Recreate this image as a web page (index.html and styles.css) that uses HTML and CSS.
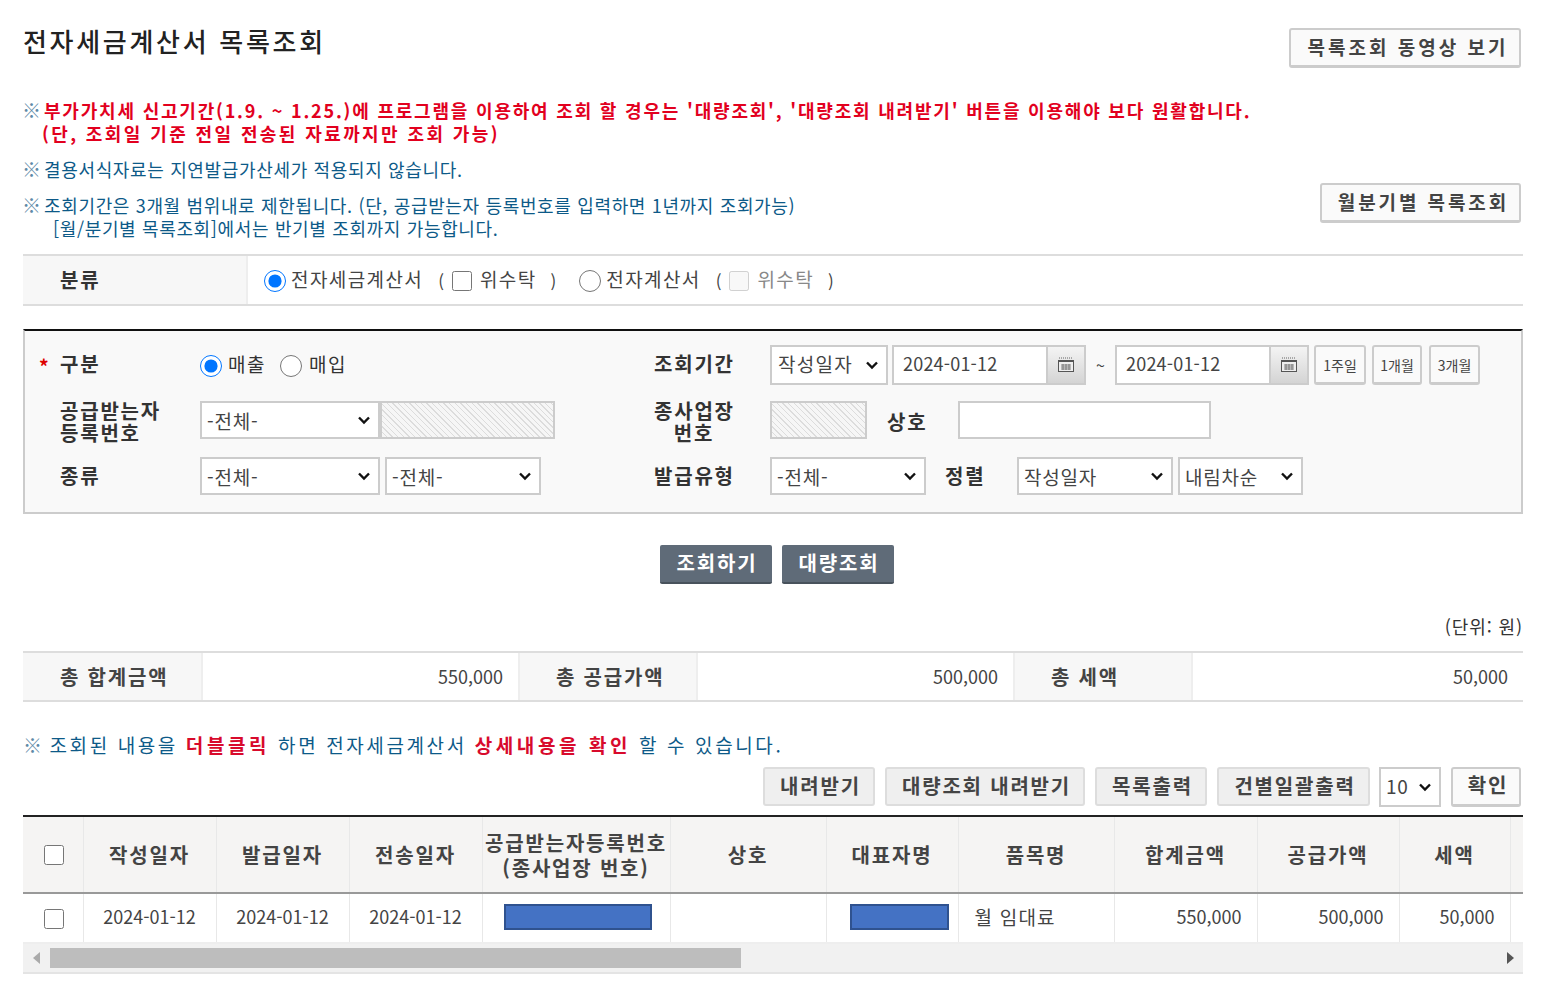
FILE: index.html
```html
<!DOCTYPE html>
<html lang="ko">
<head>
<meta charset="utf-8">
<title>전자세금계산서 목록조회</title>
<link rel="stylesheet" href="styles.css">
</head>
<body>
<main class="page">
  <header class="head">
    <h1 class="title">전자세금계산서 목록조회</h1>
    <button class="btn btn-video">목록조회 동영상 보기</button>
  </header>

  <section class="notices">
    <p class="note red first"><span class="mark">※</span>부가가치세 신고기간(1.9. ~ 1.25.)에 프로그램을 이용하여 조회 할 경우는 '대량조회', '대량조회 내려받기' 버튼을 이용해야 보다 원활합니다.<br><span class="ind1">(단, 조회일 기준 전일 전송된 자료까지만 조회 가능)</span></p>
    <p class="note blue second"><span class="mark">※</span>결용서식자료는 지연발급가산세가 적용되지 않습니다.</p>
    <div class="note-row">
      <p class="note blue"><span class="mark">※</span>조회기간은 3개월 범위내로 제한됩니다. (단, 공급받는자 등록번호를 입력하면 1년까지 조회가능)<br><span class="ind2">[월/분기별 목록조회]에서는 반기별 조회까지 가능합니다.</span></p>
      <button class="btn btn-quarter">월분기별 목록조회</button>
    </div>
  </section>

  <section class="kind">
    <div class="kind-label">분류</div>
    <div class="kind-body">
      <input type="radio" name="kind" class="radio" checked><span class="kind-txt t1">전자세금계산서</span>
      <span class="paren p1">(</span><input type="checkbox" class="check"><span class="kind-txt t2">위수탁</span><span class="paren p2">)</span>
      <input type="radio" name="kind" class="radio r2"><span class="kind-txt t1">전자계산서</span>
      <span class="paren p1">(</span><input type="checkbox" class="check" disabled><span class="kind-txt t2 dim">위수탁</span><span class="paren p2">)</span>
    </div>
  </section>

  <section class="search">
    <div class="s-row r1">
      <div class="s-left">
        <span class="star">*</span><span class="s-label up">구분</span>
        <input type="radio" name="io" class="radio io1" checked><span class="s-txt">매출</span>
        <input type="radio" name="io" class="radio r3"><span class="s-txt">매입</span>
      </div>
      <div class="s-right">
        <span class="s-label rl up">조회기간</span>
        <select class="sel w-date"><option>작성일자</option></select>
        <div class="date">
          <span class="date-val">2024-01-12</span>
          <span class="cal"><svg width="18" height="16" viewBox="0 0 18 16"><path d="M2 1h14" stroke="#666" stroke-dasharray="1 1"/><rect x="1.500" y="3.500" width="15" height="11" fill="#eee" stroke="#555"/><path d="M1 3h16v2H1z" fill="#555"/><path d="M4 8h10M4 10h10M4 12h10M6 7v6M9 7v6M12 7v6" stroke="#666" stroke-width=".8"/></svg></span>
        </div>
        <span class="tilde">~</span>
        <div class="date">
          <span class="date-val">2024-01-12</span>
          <span class="cal"><svg width="18" height="16" viewBox="0 0 18 16"><path d="M2 1h14" stroke="#666" stroke-dasharray="1 1"/><rect x="1.500" y="3.500" width="15" height="11" fill="#eee" stroke="#555"/><path d="M1 3h16v2H1z" fill="#555"/><path d="M4 8h10M4 10h10M4 12h10M6 7v6M9 7v6M12 7v6" stroke="#666" stroke-width=".8"/></svg></span>
        </div>
        <button class="btn-mini m1">1주일</button>
        <button class="btn-mini m2">1개월</button>
        <button class="btn-mini m3">3개월</button>
      </div>
    </div>
    <div class="s-row r2row">
      <div class="s-left">
        <span class="star"></span><span class="s-label two">공급받는자<br>등록번호</span>
        <select class="sel w-180"><option>-전체-</option></select>
        <div class="hatch h1"></div>
      </div>
      <div class="s-right">
        <span class="s-label rl center two">종사업장<br>번호</span>
        <div class="hatch h2"></div>
        <span class="s-label sang">상호</span>
        <div class="box-input"></div>
      </div>
    </div>
    <div class="s-row r3row">
      <div class="s-left">
        <span class="star"></span><span class="s-label">종류</span>
        <select class="sel w-180"><option>-전체-</option></select>
        <select class="sel w-156 gap5"><option>-전체-</option></select>
      </div>
      <div class="s-right">
        <span class="s-label rl">발급유형</span>
        <select class="sel w-156"><option>-전체-</option></select>
        <span class="s-label jung">정렬</span>
        <select class="sel w-156"><option>작성일자</option></select>
        <select class="sel w-125 gap5"><option>내림차순</option></select>
      </div>
    </div>
  </section>

  <div class="actions">
    <button class="btn-dark">조회하기</button>
    <button class="btn-dark">대량조회</button>
  </div>

  <div class="unit">(단위: 원)</div>

  <section class="totals">
    <div class="t-label">총 합계금액</div><div class="t-val">550,000</div>
    <div class="t-label">총 공급가액</div><div class="t-val">500,000</div>
    <div class="t-label">총 세액</div><div class="t-val">50,000</div>
  </section>

  <p class="hint"><span class="hint-mark">※</span> 조회된 내용을 <b>더블클릭</b> 하면 전자세금계산서 <b>상세내용을 확인</b> 할 수 있습니다.</p>

  <div class="toolbar">
    <button class="btn-gray w-112">내려받기</button>
    <button class="btn-gray w-200">대량조회 내려받기</button>
    <button class="btn-gray w-112">목록출력</button>
    <button class="btn-gray w-153">건별일괄출력</button>
    <select class="sel w-62"><option>10</option></select>
    <button class="btn btn-ok">확인</button>
  </div>

  <div class="grid-wrap">
    <table class="grid">
      <colgroup>
        <col class="c60"><col class="c133"><col class="c133"><col class="c133"><col class="c188"><col class="c156"><col class="c132"><col class="c156"><col class="c143"><col class="c142"><col class="c111"><col class="c13">
      </colgroup>
      <thead>
        <tr>
          <th><input type="checkbox" class="check"></th>
          <th>작성일자</th><th>발급일자</th><th>전송일자</th>
          <th class="th-two">공급받는자등록번호<br>(종사업장 번호)</th>
          <th>상호</th><th>대표자명</th><th>품목명</th><th>합계금액</th><th>공급가액</th><th>세액</th><th></th>
        </tr>
      </thead>
      <tbody>
        <tr>
          <td><input type="checkbox" class="check"></td>
          <td>2024-01-12</td><td>2024-01-12</td><td>2024-01-12</td>
          <td><span class="mask m-a"></span></td>
          <td></td>
          <td><span class="mask m-b"></span></td>
          <td class="left">월 임대료</td>
          <td class="right">550,000</td><td class="right">500,000</td><td class="right">50,000</td><td></td>
        </tr>
      </tbody>
    </table>
    <div class="scroll">
      <span class="tri tri-l"></span>
      <span class="thumb"></span>
      <span class="tri tri-r"></span>
    </div>
  </div>
</main>
</body>
</html>
```

FILE: styles.css
```css
* { box-sizing: border-box; }
html, body { margin: 0; padding: 0; background: #fff; }
body { font-family: "Noto Sans CJK KR", "Noto Sans", sans-serif; color: #333; }
p, h1 { margin: 0; }
button { font-family: inherit; cursor: default; }

.page { width: 1500px; margin-left: 23px; padding-top: 23px; height: 998px; overflow: hidden; }

.head { display: flex; justify-content: space-between; align-items: flex-start; height: 67px; }
.title { font-size: 26px; line-height: 36px; font-weight: 500; color: #222; letter-spacing: 2.7px; }

.btn { background: #fafafa; border: 2px solid #ccc; border-bottom-width: 3px; border-radius: 3px; font-weight: 700; font-size: 19px; color: #444; padding: 0 0 3px; line-height: 1; }
.btn-video { width: 232px; height: 40px; margin: 5px 2px 0 0; padding-left: 6px; letter-spacing: 3px; }
.btn-quarter { width: 201px; height: 40px; margin: -10px 2px 0 0; padding-left: 6px; letter-spacing: 2.900px; }

.notices { display: flow-root; height: 164px; }
.note { font-size: 18px; line-height: 23px; white-space: nowrap; }
.mark { display: inline-block; width: 21px; margin-left: -1px; margin-right: 1px; font-size: 19px; font-weight: 400; color: #5f8aa8; letter-spacing: 0; }
.red { color: #e2001e; font-weight: 700; letter-spacing: 1.800px; }
.blue { color: #0d5a88; letter-spacing: 0.65px; }
.first { margin-top: 8px; }
.second { margin-top: 12px; }
.ind1 { margin-left: 19px; letter-spacing: 2.400px; }
.ind2 { margin-left: 30px; }
.note-row { display: flex; justify-content: space-between; align-items: flex-start; margin-top: 12px; }

.kind { display: flex; height: 52px; border-top: 2px solid #ddd; border-bottom: 2px solid #ddd; }
.kind-label { width: 225px; background: #f7f7f7; border-right: 2px solid #eee; padding-left: 37px; font-size: 20px; font-weight: 700; line-height: 47px; color: #333; letter-spacing: 1.8px; }
.kind-body { flex: 1; display: flex; align-items: center; padding-left: 16px; font-size: 19px; color: #444; }
.radio { width: 22px; height: 22px; margin: 1px 5px 0 0; accent-color: #0075ff; flex: none; }
.check { width: 20px; height: 20px; margin: 1px 0 0; flex: none; }
.kind-txt { line-height: 1; }
.t1 { margin-top: -3px; letter-spacing: 1.400px; }
.t2 { margin-left: 8px; margin-top: -3px; letter-spacing: 1.400px; }
.dim { color: #888; }
.paren { font-size: 17px; }
.p1 { margin: 0 8px 0 15px; }
.p2 { margin: 0 23px 0 14px; }
.r2 { margin-right: 5px; }

.search { height: 185px; margin-top: 23px; background: #f9f9f9; border: 2px solid #ccc; border-top: 2px solid #111; padding-top: 14px; }
.s-row { display: flex; align-items: center; height: 40px; }
.r2row { margin-top: 16px; height: 38px; }
.r3row { margin-top: 18px; height: 38px; }
.s-left { display: flex; align-items: center; width: 628px; flex: none; }
.s-right { display: flex; align-items: center; flex: 1; }
.star { width: 35px; padding-left: 14px; color: #d00; font-size: 19px; font-weight: 700; line-height: 1; }
.s-label { font-size: 20px; font-weight: 700; color: #333; letter-spacing: 1.8px; width: 140px; line-height: 22px; flex: none; white-space: nowrap; }
.s-label.up { margin-top: -3px; }
.two { margin-top: 4px; }
.rl { width: 116px; margin-left: 1px; }
.center { text-align: center; width: 80px; margin-right: 36px; }
.s-txt { font-size: 19px; color: #333; letter-spacing: 1.500px; margin-top: -3px; }
.io1 { margin-right: 6px; }
.r3 { margin-left: 14px; margin-right: 7px; }
.sang { width: 40px; margin-left: 20px; margin-top: 3px; }
.jung { width: 72px; margin-left: 19px; }

.sel { height: 38px; appearance: none; -webkit-appearance: none; background: #fff url("data:image/svg+xml,%3Csvg xmlns='http://www.w3.org/2000/svg' width='14' height='9'%3E%3Cpath d='M2 1.500l5 5 5-5' fill='none' stroke='%23111' stroke-width='2.400'/%3E%3C/svg%3E") no-repeat right 7px center; border: 2px solid #ccc; font-family: inherit; font-size: 19px; color: #444; padding: 0 0 0 5px; border-radius: 0; flex: none; letter-spacing: 0.8px; }
.w-date { width: 118px; height: 40px; margin-right: 4px; padding-bottom: 3px; padding-left: 6px; letter-spacing: 1.300px; }
.w-180 { width: 180px; }
.w-156 { width: 156px; }
.w-125 { width: 125px; }
.w-62 { width: 62px; margin-left: -1px; padding-bottom: 3px; }
.gap5 { margin-left: 5px; }

.date { display: flex; width: 194px; height: 40px; background: #fff; border: 2px solid #ccc; flex: none; }
.date-val { width: 152px; font-size: 18px; line-height: 32px; padding-left: 9px; color: #444; letter-spacing: 0.2px; }
.cal { flex: 1; display: flex; align-items: center; justify-content: center; background: linear-gradient(#f4f4f4, #d4d4d4); border-left: 2px solid #ccc; }
.tilde { width: 29px; text-align: center; font-size: 16px; color: #444; }
.btn-mini { width: 52px; height: 40px; margin-left: 5px; padding: 0; background: #fafafa; border: 2px solid #ccc; border-bottom-width: 3px; border-radius: 3px; font-size: 14px; color: #444; white-space: nowrap; overflow: hidden; }
.m2 { width: 50px; margin-left: 6px; }
.m3 { width: 51px; margin-left: 7px; }

.hatch { height: 38px; border: 2px solid #ccc; background: repeating-linear-gradient(45deg, #f6f6f6 0, #f6f6f6 3px, #dcdcdc 3px, #dcdcdc 4px); flex: none; }
.h1 { width: 175px; }
.h2 { width: 97px; }
.box-input { width: 253px; height: 38px; background: #fff; border: 2px solid #ccc; margin-left: 31px; }

.actions { display: flex; justify-content: center; gap: 10px; margin-top: 31px; padding-left: 7px; }
.btn-dark { width: 112px; height: 39px; background: #5f6b78; border: 0; border-bottom: 2px solid #48525c; border-radius: 2px; color: #fff; font-size: 20px; font-weight: 700; letter-spacing: 1.8px; padding: 0 0 3px 3px; }

.unit { margin-top: 29px; height: 27px; text-align: right; font-size: 18px; line-height: 27px; color: #333; letter-spacing: 0.9px; }
.totals { display: grid; grid-template-columns: 180px 315px 180px 315px 180px 330px; height: 51px; margin-top: 11px; border-top: 2px solid #ddd; border-bottom: 2px solid #ddd; }
.t-label { background: #f7f7f7; border-right: 2px solid #eee; border-left: 2px solid #eee; font-size: 20px; font-weight: 700; line-height: 47px; padding-left: 36px; letter-spacing: 1.8px; color: #444; white-space: nowrap; }
.t-label:first-child { border-left: 0; padding-left: 37px; }
.t-val { text-align: right; font-size: 18px; line-height: 47px; padding-right: 15px; color: #444; }

.hint { margin-top: 30px; font-size: 19px; line-height: 26px; color: #0d5a88; letter-spacing: 2.6px; white-space: nowrap; }
.hint-mark { color: #5f8aa8; letter-spacing: -0.4px; }
.hint b { color: #d80a2c; letter-spacing: 3.6px; }

.toolbar { display: flex; justify-content: flex-end; align-items: flex-start; gap: 10px; margin-top: 9px; height: 48px; padding-right: 2px; }
.btn-gray { height: 39px; background: #efefef; border: 2px solid #ddd; border-radius: 3px; font-size: 20px; font-weight: 700; color: #444; padding: 0 0 3px 3px; letter-spacing: 1.8px; }
.w-112 { width: 112px; }
.w-200 { width: 200px; }
.w-153 { width: 153px; }
.btn-ok { width: 70px; height: 40px; font-size: 20px; letter-spacing: 1.8px; padding-left: 4px; }
.toolbar .sel { height: 40px; }

.grid-wrap { border-top: 2px solid #222; }
.grid { border-collapse: collapse; table-layout: fixed; width: 1500px; }
.c60 { width: 60px; } .c133 { width: 133px; } .c188 { width: 188px; } .c156 { width: 156px; } .c132 { width: 132px; } .c143 { width: 143px; } .c142 { width: 142px; } .c111 { width: 111px; } .c13 { width: 13px; }
.grid th { height: 76px; background: #f5f4f3; border-left: 1px solid #e8e8e8; border-bottom: 2px solid #999; font-size: 20px; font-weight: 700; color: #444; letter-spacing: 1.8px; padding: 0; }
.grid th:first-child, .grid td:first-child { border-left: 0; }
.th-two { line-height: 25px; white-space: nowrap; }
.grid .check { display: block; margin: 1px 0 0 21px; }
.grid td .check { margin-top: 5px; }
.grid td { height: 50px; border-left: 1px solid #e8e8e8; border-bottom: 2px solid #eee; text-align: center; font-size: 18px; color: #444; padding: 0 0 4px; }
.grid td.left { text-align: left; padding-left: 16px; font-size: 19px; letter-spacing: 1.200px; }
.grid td.right { text-align: right; padding-right: 15px; }
.mask { display: inline-block; height: 26px; background: #4472c4; border: 2px solid #2f528f; vertical-align: middle; margin-top: -2px; }
.m-a { width: 148px; margin-left: 4px; }
.m-b { width: 99px; margin-left: 14px; }

.scroll { display: flex; align-items: center; height: 30px; background: #f1f1f1; border-bottom: 2px solid #e4e4e4; }
.tri { width: 0; height: 0; border-top: 6px solid transparent; border-bottom: 6px solid transparent; flex: none; }
.tri-l { border-right: 7px solid #aaa; margin: 0 10px 0 10px; }
.tri-r { border-left: 7px solid #555; margin: 0 9px 0 auto; }
.thumb { width: 691px; height: 20px; background: #bdbdbd; flex: none; }
```
